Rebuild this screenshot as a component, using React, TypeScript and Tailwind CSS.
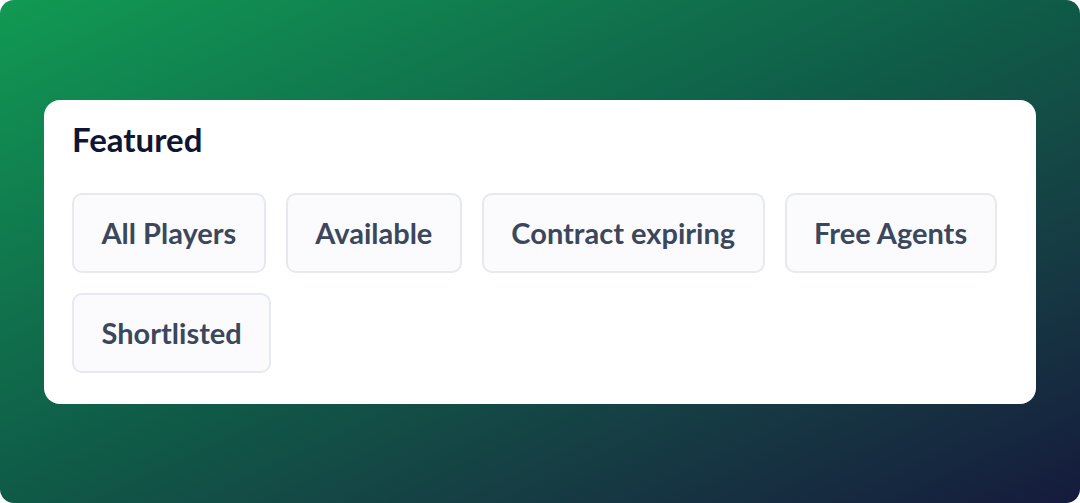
const FILTERS = ["All Players", "Available", "Contract expiring", "Free Agents", "Shortlisted"];

export default function App() {
  return (
    <div className="w-[1080px] h-[503px] bg-white" style={{ fontFamily: "Lato, 'Noto Sans', sans-serif" }}>
      <div className="w-full h-full rounded-[14px] bg-gradient-to-br from-[#119a53] via-[#0f5a47] to-[#151a3c] flex items-center justify-center">
        <div className="w-[992px] bg-white rounded-[16px] px-[28px] pt-[20px] pb-[31px]">
          <h2 className="text-[33px] leading-[38px] font-bold text-[#0f1633]">Featured</h2>
          <div className="mt-[35px] flex flex-wrap gap-[20px]">
            {FILTERS.map((f) => (
              <button
                key={f}
                type="button"
                className="h-[80px] px-[27.5px] rounded-[10px] border-2 border-[#e6e8f2] bg-[#fbfbfd] text-[29px] font-bold text-[#3b475c]"
              >
                {f}
              </button>
            ))}
          </div>
        </div>
      </div>
    </div>
  );
}
